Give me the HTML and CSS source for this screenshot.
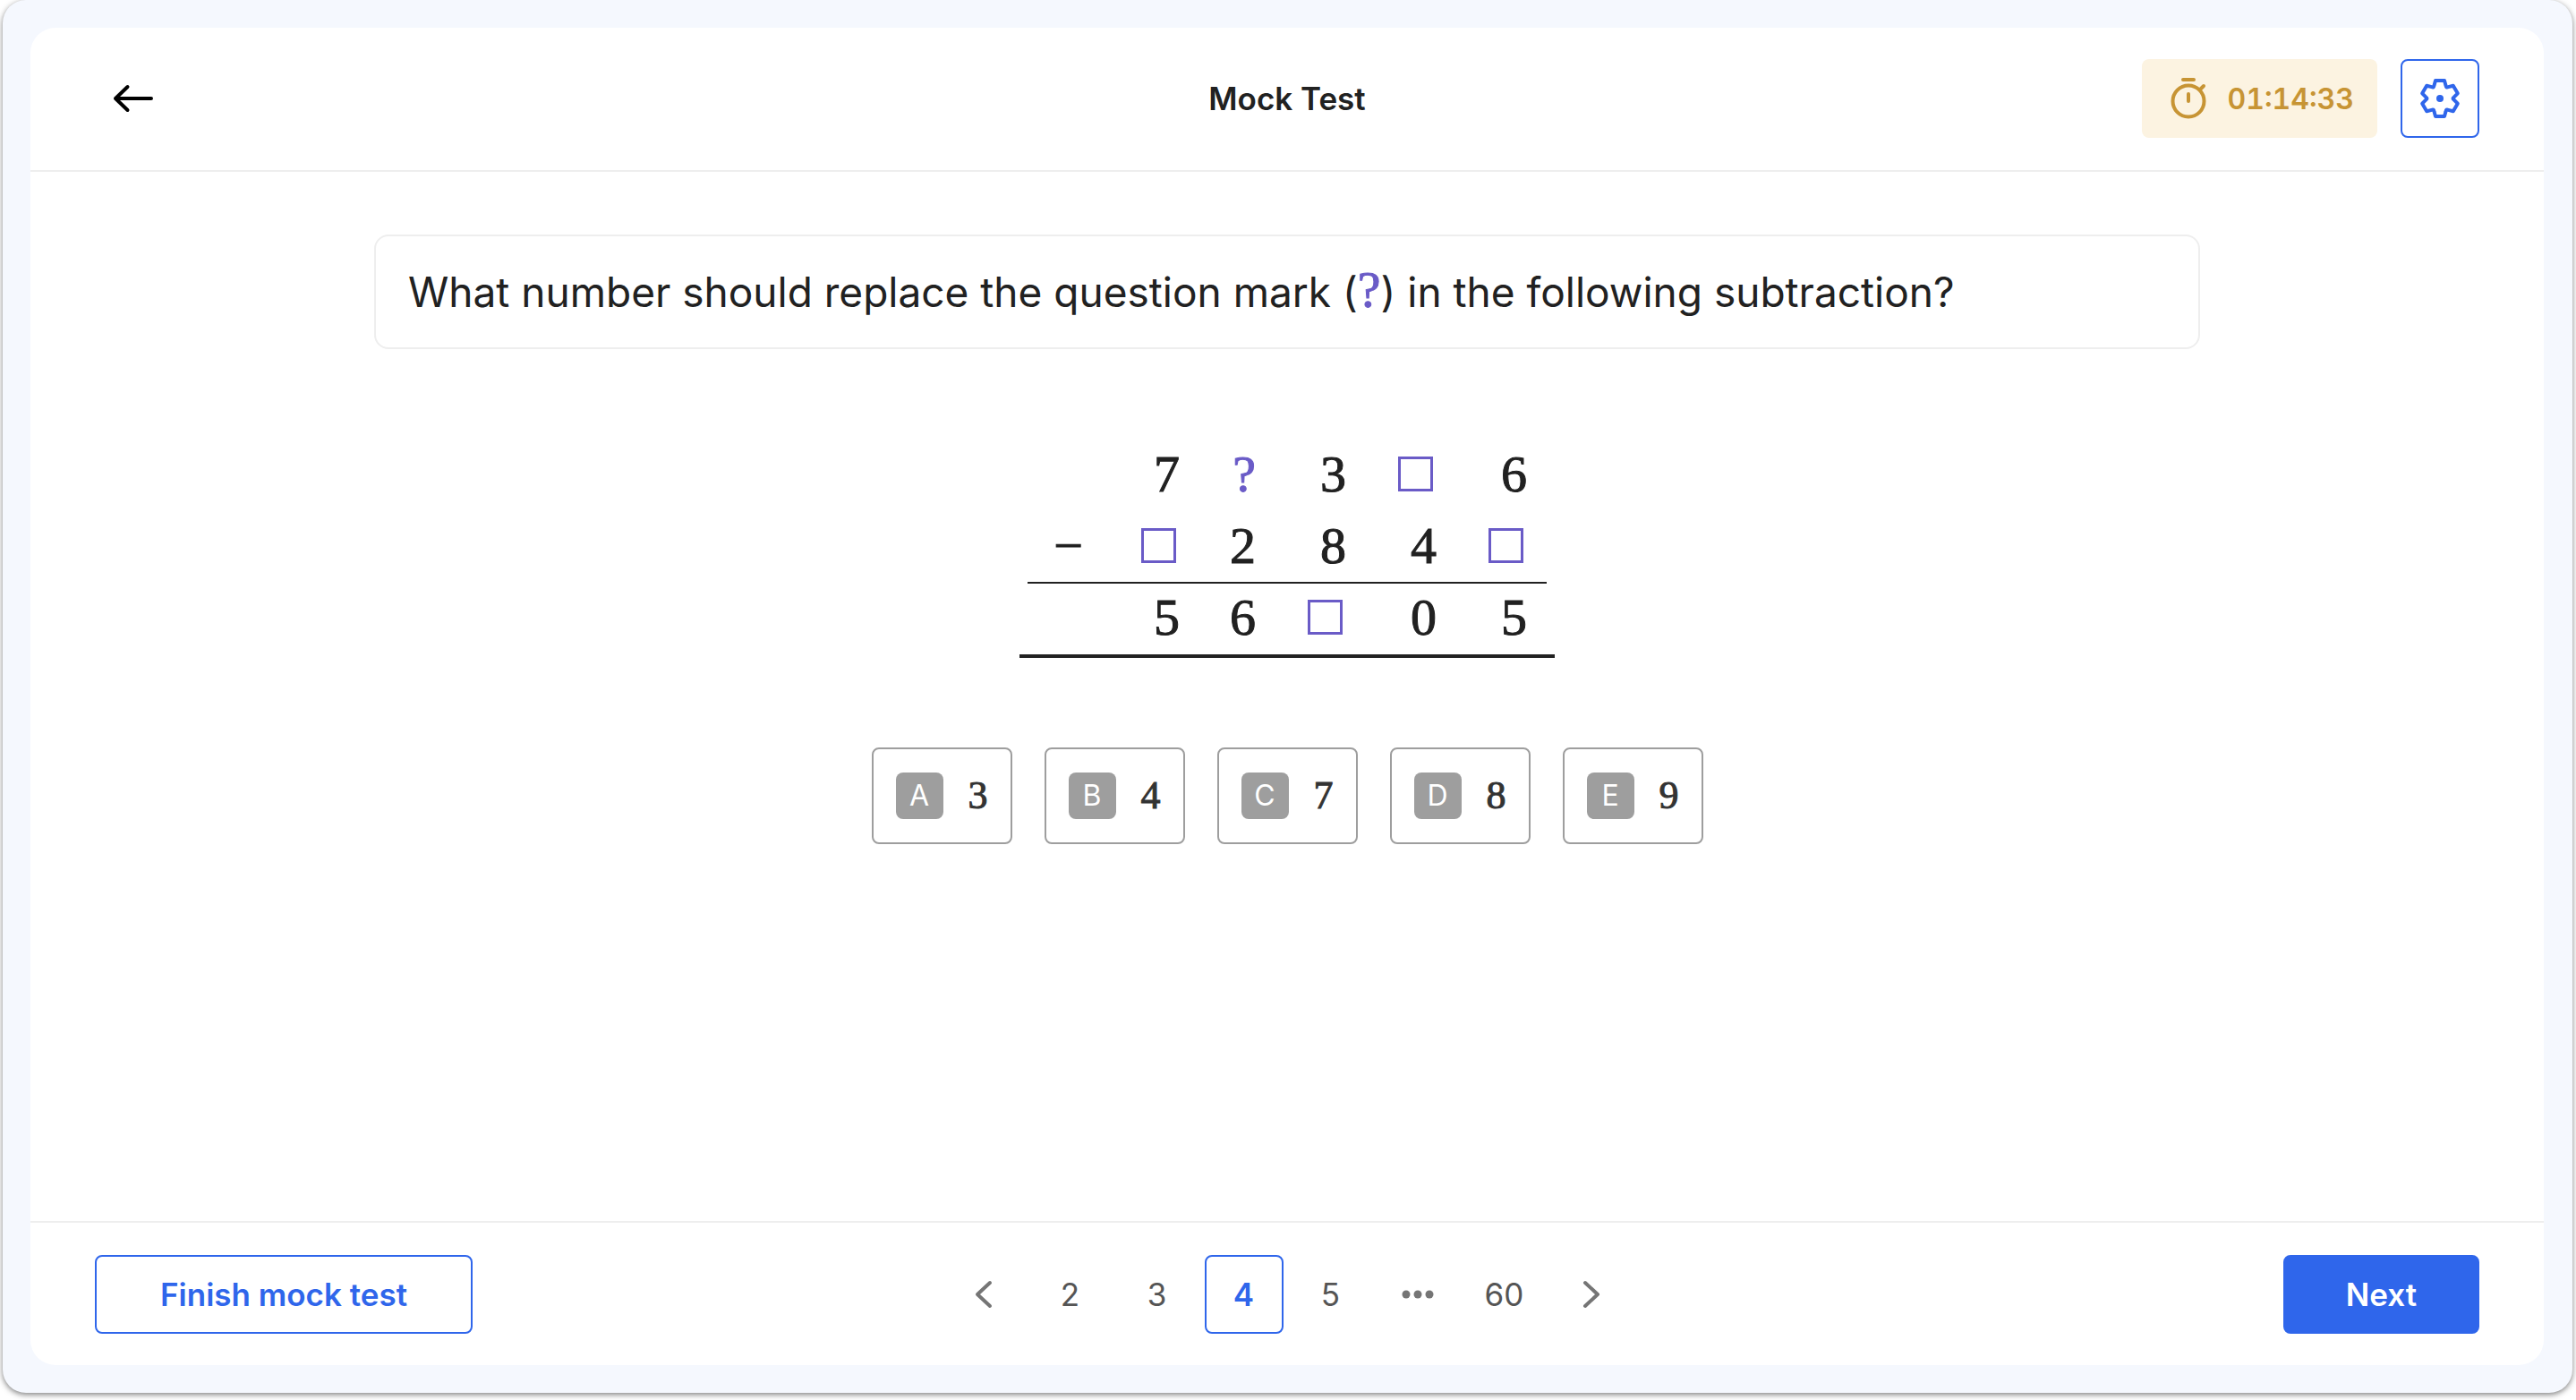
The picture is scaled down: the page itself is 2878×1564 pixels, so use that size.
FILE: index.html
```html
<!DOCTYPE html>
<html lang="en">
<head>
    <meta charset="UTF-8">
    <meta name="viewport" content="width=device-width, initial-scale=1.0">
    <title>Mock Test</title>
    <link rel="stylesheet" href="styles.css">
</head>
<body>
    <div class="shell">
        <div class="panel">
            <header class="header">
                <button class="back" type="button" aria-label="Back">
                    <svg width="48" height="36" viewBox="0 0 48 36" fill="none" stroke="currentColor" stroke-width="4" stroke-linecap="round" stroke-linejoin="round">
                        <path d="M44 18H4M17.5 5L4 18l13.5 13"/>
                    </svg>
                </button>
                <h1 class="title">Mock Test</h1>
                <div class="tools">
                    <div class="timer">
                        <svg width="40" height="48" viewBox="0 0 40 48" fill="none" stroke="currentColor" stroke-width="4" stroke-linecap="round">
                            <circle cx="20" cy="27" r="17.5"/>
                            <path d="M20 19v8M14 3h12M33 14l4-4"/>
                        </svg>
                        <time>01:14:33</time>
                    </div>
                    <button class="settings" type="button" aria-label="Settings">
                        <svg width="48" height="48" viewBox="-24 -24 48 48" fill="none" stroke="currentColor" stroke-width="4" stroke-linejoin="round">
                            <path d="M-6.5-14.5L-5-20H5L6.5-14.5Q7-11.5 9.3-12.9L14.8-14.3 19.8-5.7 15.8-1.6Q13.2 0 15.8 1.6L19.8 5.7 14.8 14.3 9.3 12.9Q7 11.5 6.5 14.5L5 20H-5L-6.5 14.5Q-7 11.5-9.3 12.9L-14.8 14.3-19.8 5.7-15.8 1.6Q-13.2 0-15.8-1.6L-19.8-5.7-14.8-14.3-9.3-12.9Q-7-11.5-6.5-14.5z"/>
                            <circle r="4" fill="currentColor" stroke="none"/>
                        </svg>
                    </button>
                </div>
            </header>

            <main class="main">
                <p class="question">What number should replace the question mark (<span class="mark">?</span>) in the following subtraction?</p>

                <div class="sum">
                    <table>
                        <tr>
                            <td></td><td>7</td><td class="mark">?</td><td>3</td><td><span class="blank"></span></td><td>6</td>
                        </tr>
                        <tr class="ruled">
                            <td>−</td><td><span class="blank"></span></td><td>2</td><td>8</td><td>4</td><td><span class="blank"></span></td>
                        </tr>
                        <tr class="result">
                            <td></td><td>5</td><td>6</td><td><span class="blank"></span></td><td>0</td><td>5</td>
                        </tr>
                    </table>
                </div>

                <div class="options">
                    <button class="option" type="button"><span class="letter">A</span>3</button>
                    <button class="option" type="button"><span class="letter">B</span>4</button>
                    <button class="option" type="button"><span class="letter">C</span>7</button>
                    <button class="option" type="button"><span class="letter">D</span>8</button>
                    <button class="option" type="button"><span class="letter">E</span>9</button>
                </div>
            </main>

            <footer class="footer">
                <button class="finish" type="button">Finish mock test</button>
                <nav class="pages" aria-label="Questions">
                    <button class="page" type="button" aria-label="Previous">
                        <svg width="20" height="32" viewBox="0 0 20 32" fill="none" stroke="#757575" stroke-width="4" stroke-linecap="round" stroke-linejoin="round"><path d="M17 3L3 16l14 13"/></svg>
                    </button>
                    <button class="page" type="button">2</button>
                    <button class="page" type="button">3</button>
                    <button class="page current" type="button" aria-current="page">4</button>
                    <button class="page" type="button">5</button>
                    <span class="page">
                        <svg width="36" height="10" viewBox="0 0 36 10" fill="#757575"><circle cx="5" cy="5" r="4.5"/><circle cx="18" cy="5" r="4.5"/><circle cx="31" cy="5" r="4.5"/></svg>
                    </span>
                    <button class="page" type="button">60</button>
                    <button class="page" type="button" aria-label="Following">
                        <svg width="20" height="32" viewBox="0 0 20 32" fill="none" stroke="#757575" stroke-width="4" stroke-linecap="round" stroke-linejoin="round"><path d="M3 3l14 13L3 29"/></svg>
                    </button>
                </nav>
                <button class="next" type="button">Next</button>
            </footer>
        </div>
    </div>
</body>
</html>
```
FILE: styles.css
```css
* {
    box-sizing: border-box;
}

body {
    margin: 0;
    height: 100vh;
    padding: 0 4px 8px 3px;
    background-color: #fff;
    color: #212121;
    font-family: Inter, "Liberation Sans", sans-serif;
    font-size: 35px;
}

button {
    padding: 0;
    border: none;
    background: none;
    color: inherit;
    font: inherit;
    cursor: pointer;
}

svg {
    display: block;
}

.shell {
    display: flex;
    height: 100%;
    padding: 31px 32px 31px 31px;
    border-radius: 26px;
    background-color: #f5f8fe;
    box-shadow: 0 2px 6px rgba(0, 0, 0, 0.5);
}

.panel {
    flex: 1;
    display: flex;
    flex-direction: column;
    border-radius: 28px;
    background-color: #fff;
}

.header, .footer {
    display: grid;
    grid-template-columns: 1fr auto 1fr;
    align-items: center;
    padding: 35px 72px 36px;
}

.header {
    border-bottom: 2px solid #eee;
}

.footer {
    padding: 36px 72px 35px;
    border-top: 2px solid #eee;
}

.back, .settings {
    display: flex;
    align-items: center;
    justify-content: center;
    width: 88px;
    height: 88px;
}

.back {
    width: 86px;
    color: #000;
}

.title {
    margin: 0;
    font-size: 35px;
    font-weight: 600;
}

.tools {
    display: flex;
    justify-content: flex-end;
    gap: 26px;
}

.timer {
    display: flex;
    align-items: center;
    gap: 24px;
    height: 88px;
    padding: 0 26px 0 32px;
    border-radius: 8px;
    background-color: #fcf3e1;
    color: #c79434;
    font-size: 32px;
    font-weight: 600;
    font-variant-numeric: tabular-nums;
}

.settings {
    border: 2px solid #2f66eb;
    border-radius: 8px;
    color: #2f66eb;
}

.main {
    flex: 1;
    display: flex;
    flex-direction: column;
    align-items: center;
    gap: 100px;
    padding: 70px 40px;
}

.question {
    width: 100%;
    max-width: 2040px;
    margin: 0;
    padding: 34px 36px;
    border: 2px solid #eee;
    border-radius: 16px;
    font-size: 46px;
    line-height: 56px;
}

.mark {
    color: #6a5bc7;
    font-family: "Liberation Serif", serif;
    font-size: 58px;
    -webkit-text-stroke: 1px;
}

.question .mark {
    line-height: 1px;
}

.sum {
    padding: 0 9px;
    border-bottom: 4px solid #212121;
}

.sum table {
    border-collapse: collapse;
    font-family: "Liberation Serif", serif;
    font-size: 58px;
    line-height: 80px;
    -webkit-text-stroke: 1px;
}

.sum td {
    min-width: 101px;
    height: 80px;
    padding: 0 0 0 54px;
    text-align: right;
    vertical-align: top;
}

.sum td:first-child {
    min-width: 69px;
    padding: 0 0 0 22px;
    text-align: center;
}

.sum td:nth-child(3) {
    min-width: 85px;
}

.sum td:last-child {
    padding-right: 22px;
}

.ruled {
    border-bottom: 2px solid #212121;
}

.result {
    line-height: 76px;
}

.blank {
    display: inline-block;
    width: 39px;
    height: 39px;
    margin: 0 4px;
    border: 3px solid #6a5bc7;
}

.options {
    display: flex;
    gap: 36px;
}

.option {
    display: flex;
    align-items: center;
    gap: 28px;
    padding: 26px 25px;
    border: 2px solid #9e9e9e;
    border-radius: 8px;
    color: #333;
    font-family: "Liberation Serif", serif;
    font-size: 44px;
    line-height: 52px;
    -webkit-text-stroke: 1px;
}

.letter {
    width: 53px;
    border-radius: 8px;
    background-color: #9e9e9e;
    color: #fff;
    font-family: Inter, "Liberation Sans", sans-serif;
    font-size: 32px;
    -webkit-text-stroke: 0;
}

.finish, .next {
    height: 88px;
    padding: 0 71px;
    border: 2px solid #2f66eb;
    border-radius: 8px;
    color: #2f66eb;
    font-weight: 600;
}

.finish {
    justify-self: start;
}

.next {
    justify-self: end;
    padding: 0 68px;
    background-color: #2f66eb;
    color: #fff;
}

.pages {
    display: flex;
    gap: 9px;
}

.page {
    display: flex;
    align-items: center;
    justify-content: center;
    width: 88px;
    height: 88px;
    color: #555;
}

.current {
    border: 2px solid #2f66eb;
    border-radius: 8px;
    color: #2f66eb;
    font-weight: 600;
}
```
